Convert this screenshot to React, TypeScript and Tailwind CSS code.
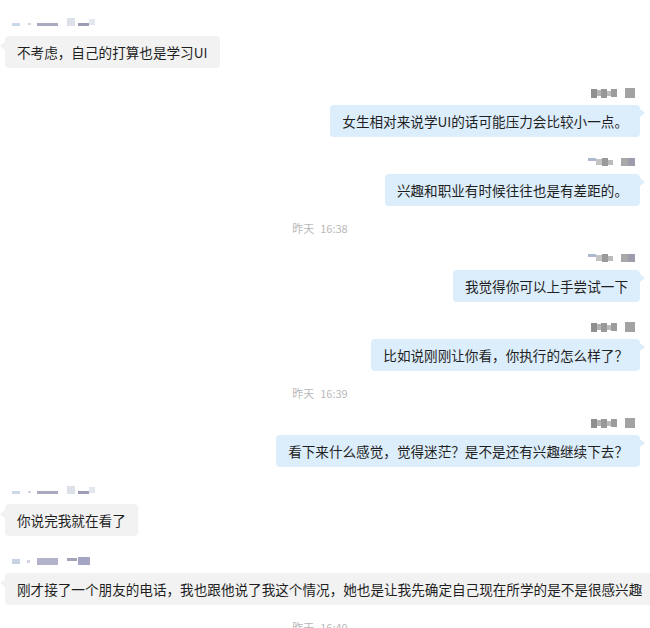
import React from "react";

type Block = { w: number; h: number; c: string; ml?: number; dy?: number };

const leftA: Block[] = [
  { w: 8, h: 3, c: "#c9d9ea", ml: 12 },
  { w: 3, h: 2, c: "#d2d6e2", ml: 8 },
  { w: 21, h: 3, c: "#a9a9c0", ml: 6 },
  { w: 8, h: 8, c: "#dde1ea", ml: 9, dy: -2 },
  { w: 11, h: 3, c: "#9d9db6", ml: 3 },
  { w: 6, h: 6, c: "#e3e7ef", ml: 0, dy: -2 },
];

const leftB: Block[] = [
  { w: 8, h: 5, c: "#c5d3e3", ml: 12 },
  { w: 3, h: 3, c: "#d0d4e0", ml: 7 },
  { w: 21, h: 7, c: "#b2b3cb", ml: 7 },
  { w: 10, h: 3, c: "#a3a4b8", ml: 9, dy: -2 },
  { w: 12, h: 8, c: "#a3a5c3", ml: 1 },
];

const rightA: Block[] = [
  { w: 6, h: 9, c: "#8f8f8f" },
  { w: 4, h: 6, c: "#b4b4b4" },
  { w: 6, h: 9, c: "#999999" },
  { w: 4, h: 5, c: "#bcbcbc" },
  { w: 6, h: 8, c: "#9c9c9c" },
  { w: 10, h: 10, c: "#a2a2a2", ml: 8 },
];

const rightB: Block[] = [
  { w: 8, h: 3, c: "#aeb8cc", dy: -3 },
  { w: 6, h: 6, c: "#c3c3c3" },
  { w: 6, h: 8, c: "#9a9a9a" },
  { w: 5, h: 5, c: "#bbbbbb" },
  { w: 7, h: 8, c: "#a8a8a8", ml: 8 },
  { w: 7, h: 8, c: "#9c9cab" },
];

function Mosaic({ blocks }: { blocks: Block[] }) {
  return (
    <div className="flex h-[14px] items-center blur-[0.6px]">
      {blocks.map((b, i) => (
        <div
          key={i}
          style={{
            width: b.w,
            height: b.h,
            background: b.c,
            marginLeft: b.ml ?? 0,
            transform: b.dy ? `translateY(${b.dy}px)` : undefined,
          }}
        />
      ))}
    </div>
  );
}

function LeftMsg({ name, text, wide }: { name: Block[]; text: string; wide?: boolean }) {
  return (
    <div className="flex flex-col items-start">
      <Mosaic blocks={name} />
      <div className={`relative ml-[5px] mt-[5px] flex h-[32px] items-center whitespace-nowrap rounded-[4px] bg-[#f2f2f2] px-[12px] text-[13.6px] text-[#1f1f1f] ${wide ? "shrink-0" : ""}`}>
        <div className="absolute -left-[5px] top-[6px] h-0 w-0 border-y-[4px] border-r-[5px] border-y-transparent border-r-[#f2f2f2]" />
        {text}
      </div>
    </div>
  );
}

function RightMsg({ name, text }: { name: Block[]; text: string }) {
  return (
    <div className="flex flex-col items-end pr-[10px]">
      <div className="pr-[5px]">
        <Mosaic blocks={name} />
      </div>
      <div className="relative mt-[5px] flex h-[32px] items-center whitespace-nowrap rounded-[4px] bg-[#dcedfb] px-[12px] text-[13.6px] text-[#1f1f1f]">
        <div className="absolute -right-[5px] top-[4px] h-0 w-0 border-y-[4px] border-l-[5px] border-y-transparent border-l-[#dcedfb]" />
        {text}
      </div>
    </div>
  );
}

function Stamp({ time }: { time: string }) {
  return (
    <div className="mb-[15px] mt-[14px] flex h-[16px] items-center justify-center pr-[10px] text-[11px] text-[#b9b9b9]">
      <span>昨天</span>
      <span className="ml-[6px]">{time}</span>
    </div>
  );
}

export default function App() {
  return (
    <div
      className="flex h-[628px] w-[650px] flex-col overflow-hidden bg-white pt-[17px]"
      style={{ fontFamily: '"Noto Sans CJK SC", "Noto Sans", sans-serif' }}
    >
      <LeftMsg name={leftA} text="不考虑，自己的打算也是学习UI" />
      <div className="h-[18px] shrink-0" />
      <RightMsg name={rightA} text="女生相对来说学UI的话可能压力会比较小一点。" />
      <div className="h-[18px] shrink-0" />
      <RightMsg name={rightB} text="兴趣和职业有时候往往也是有差距的。" />
      <Stamp time="16:38" />
      <RightMsg name={rightB} text="我觉得你可以上手尝试一下" />
      <div className="h-[18px] shrink-0" />
      <RightMsg name={rightA} text="比如说刚刚让你看，你执行的怎么样了？" />
      <Stamp time="16:39" />
      <RightMsg name={rightA} text="看下来什么感觉，觉得迷茫？是不是还有兴趣继续下去？" />
      <div className="h-[18px] shrink-0" />
      <LeftMsg name={leftA} text="你说完我就在看了" />
      <div className="h-[18px] shrink-0" />
      <LeftMsg name={leftB} text="刚才接了一个朋友的电话，我也跟他说了我这个情况，她也是让我先确定自己现在所学的是不是很感兴趣" wide />
      <Stamp time="16:40" />
    </div>
  );
}
